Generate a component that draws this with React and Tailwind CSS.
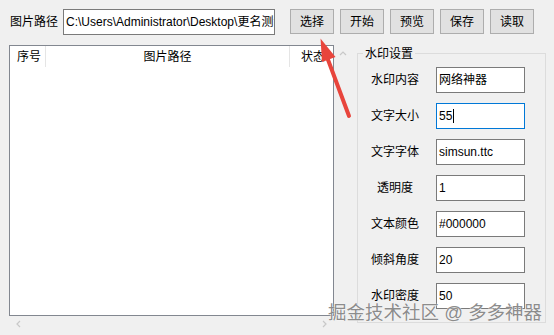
const fields = [
  { label: "水印内容", value: "网络神器" },
  { label: "文字大小", value: "55", focused: true },
  { label: "文字字体", value: "simsun.ttc" },
  { label: "透明度", value: "1" },
  { label: "文本颜色", value: "#000000" },
  { label: "倾斜角度", value: "20" },
  { label: "水印密度", value: "50" },
];

const buttons = ["选择", "开始", "预览", "保存", "读取"];

const font = "font-['Liberation_Sans','Noto_Sans_CJK_SC',sans-serif]";

export default function App() {
  return (
    <div className={`relative w-[554px] h-[335px] overflow-hidden bg-[#f0f0f0] text-[12px] text-black ${font}`}>
      {/* top bar */}
      <div className="flex items-center pt-[9px] pl-[10px]">
        <span className="w-[53px] leading-none whitespace-nowrap">图片路径</span>
        <div className="w-[212px] h-[26px] border border-[#7a7a7a] bg-white flex items-center pl-[2px] overflow-hidden whitespace-nowrap">
          C:\Users\Administrator\Desktop\更名测试
        </div>
        <div className="flex gap-[6px] ml-[15px] -mt-[1px]">
          {buttons.map((b) => (
            <button
              key={b}
              className="w-[44px] h-[25px] bg-[#e1e1e1] border border-[#adadad] flex items-center justify-center leading-none"
            >
              {b}
            </button>
          ))}
        </div>
      </div>

      {/* body */}
      <div className="flex mt-[10px] pl-[9px]">
        <div className="flex flex-col">
          <div className="flex">
            {/* list view */}
            <div className="w-[325px] h-[271px] border border-[#828790] bg-white">
              <div className="flex h-[21px] items-center leading-none">
                <div className="w-[36px] h-full pl-[7px] flex items-center border-r border-[#e5e5e5] whitespace-nowrap">序号</div>
                <div className="w-[244px] h-full flex items-center justify-center border-r border-[#e5e5e5]">图片路径</div>
                <div className="flex-1 h-full pl-[11px] flex items-center overflow-hidden whitespace-nowrap">状态</div>
              </div>
            </div>
            {/* vertical scrollbar */}
            <div className="w-[17px] h-[271px] flex justify-center pt-[5px]">
              <svg width="8" height="6" viewBox="0 0 8 6">
                <path d="M1 5 L4 2 L7 5" fill="none" stroke="#c8c8c8" strokeWidth="1.2" />
              </svg>
            </div>
          </div>
          {/* horizontal scrollbar */}
          <div className="w-[325px] h-[16px] flex items-center justify-between px-[6px]">
            <svg width="6" height="8" viewBox="0 0 6 8">
              <path d="M5 1 L2 4 L5 7" fill="none" stroke="#c8c8c8" strokeWidth="1.2" />
            </svg>
            <svg width="6" height="8" viewBox="0 0 6 8">
              <path d="M1 1 L4 4 L1 7" fill="none" stroke="#c8c8c8" strokeWidth="1.2" />
            </svg>
          </div>
        </div>

        {/* group box */}
        <div className="relative ml-[6px] mt-[8px] w-[189px] h-[270px] border border-[#dcdcdc] pt-[13px] pl-[11px]">
          <span className="absolute -top-[8px] left-[5px] px-[2px] bg-[#f0f0f0] leading-[16px] whitespace-nowrap">水印设置</span>
          <div className="flex flex-col gap-[10px]">
            {fields.map((f) => (
              <div key={f.label} className="flex items-center">
                <span className="w-[52px] text-center leading-none whitespace-nowrap">{f.label}</span>
                <div
                  className={`ml-[15px] w-[89px] h-[26px] bg-white border flex items-center pl-[2px] whitespace-nowrap overflow-hidden ${
                    f.focused ? "border-[#0078d7]" : "border-[#7a7a7a]"
                  }`}
                >
                  {f.value}
                  {f.focused && <span className="w-px h-[14px] bg-black ml-[1px]" />}
                </div>
              </div>
            ))}
          </div>
        </div>
      </div>

      {/* red arrow annotation */}
      <svg className="absolute left-0 top-0 pointer-events-none" width="554" height="335">
        <line x1="349" y1="116" x2="327" y2="57" stroke="#e8453c" strokeWidth="4" strokeLinecap="round" />
        <polygon points="320.5,38.5 335.5,57 322,62" fill="#e8453c" />
      </svg>

      {/* watermark */}
      <div className="absolute left-[328px] top-[300px] text-[18.5px] leading-[26px] text-[#8c8c8c] whitespace-nowrap [text-shadow:0_0_1px_#ffffff,0_0_1px_#ffffff]">
        掘金技术社区 @ 多多神器
      </div>
    </div>
  );
}
